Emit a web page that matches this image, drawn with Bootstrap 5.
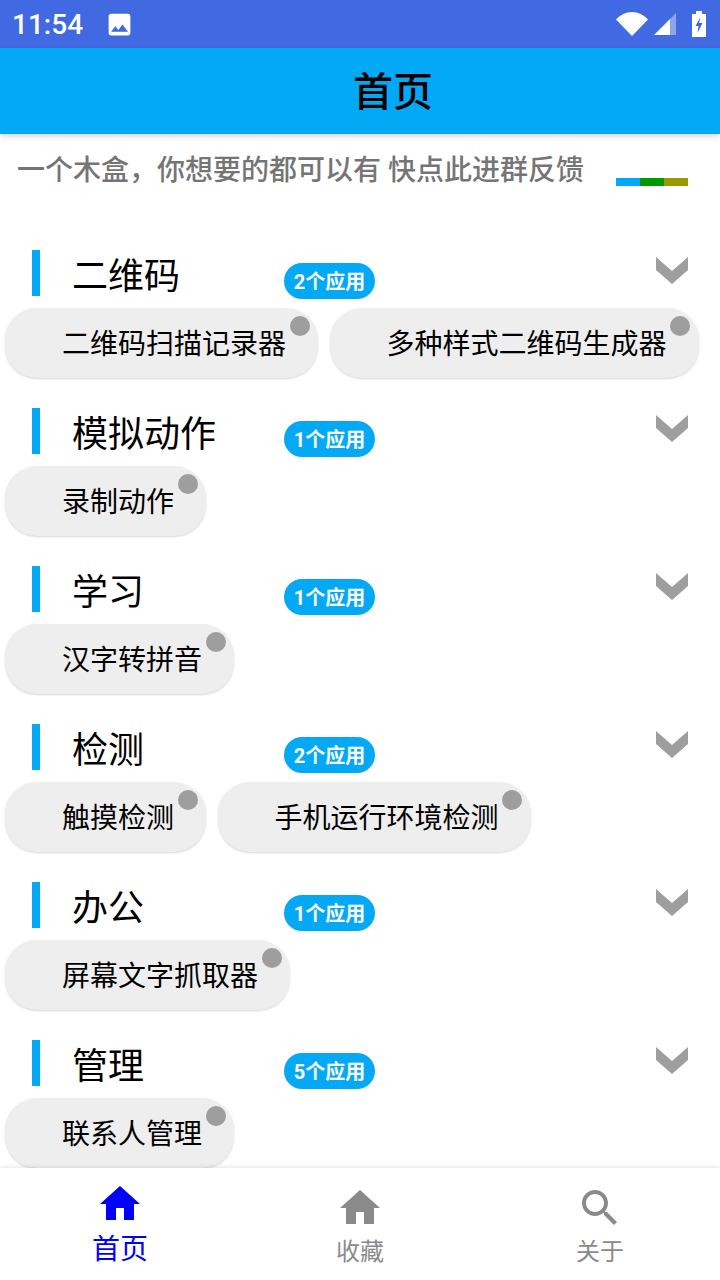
<!DOCTYPE html>
<html lang="zh">
<head>
  <meta charset="UTF-8">
  <title>首页</title>
  <link href="https://cdn.jsdelivr.net/npm/bootstrap@5.3.3/dist/css/bootstrap.min.css" rel="stylesheet">
  <style>
    html, body { height: 100%; }
    body {
      font-family: Roboto, "Noto Sans CJK SC", "Noto Sans", sans-serif;
      background: #fff;
      color: #000;
      overflow: hidden;
    }
    .phone-page { width: 720px; height: 1280px; }

    .status-strip { height: 48px; background: #4169e1; color: #fff; padding: 0 14px 0 12px; flex: none; }
    .status-time { font-family: Roboto, sans-serif; font-size: 28px; font-weight: 500; line-height: 48px; margin-top: 2px; }
    .status-pic { margin-left: 22px; }
    .status-wifi { margin-right: 6px; }
    .status-signal { margin-right: 16px; }

    .app-head {
      height: 86px; flex: none; background: #03a9f4; padding-left: 66px;
      font-size: 40px; font-weight: 500; line-height: 90px; text-align: center;
      box-shadow: 0 2px 6px rgba(0,0,0,.18); position: relative; z-index: 2;
    }

    .scroll-area { flex: 1 1 auto; min-height: 0; overflow: hidden; }

    .notice-row { height: 86px; padding: 16px 32px 0 17px; }
    .notice-text { font-size: 28px; font-weight: 500; line-height: 42px; color: #757575; white-space: nowrap; }
    .stripe-set { margin-top: 28px; }
    .stripe-set span { display: block; width: 24px; height: 8px; }
    .stripe-a { background: #03a9f4; }
    .stripe-b { background: #009900; }
    .stripe-c { background: #999900; }

    .group-block { padding-top: 30px; }
    .group-head { height: 46px; padding: 0 32px; margin-bottom: 12px; }
    .group-bar { width: 8px; height: 46px; background: #03a9f4; flex: none; }
    .group-title { width: 244px; padding-left: 32px; font-size: 36px; line-height: 54px; white-space: nowrap; }
    .count-tag {
      height: 36px; width: 91px; margin-top: 13px; padding: 0; background: #03a9f4;
      color: #fff; font-size: 20px; font-weight: 700; line-height: 38px; text-align: center;
    }
    .group-arrow { margin-top: 7px; margin-right: -1px; }

    .pill-wrap { padding-left: 5px; gap: 11.5px; }
    .app-pill {
      height: 70px; padding: 0 32px 0 57px; border-radius: 32px; background: #eeeeee;
      box-shadow: 0 1px 2px rgba(0,0,0,.16);
      font-size: 28px; line-height: 74px; white-space: nowrap; position: relative;
    }
    .pill-dot {
      position: absolute; top: 8px; right: 8.5px; width: 20px; height: 20px;
      border-radius: 50%; background: #9e9e9e;
    }

    .tab-strip {
      height: 112px; flex: none; background: #fff; position: relative; z-index: 2;
      box-shadow: 0 -1px 4px rgba(0,0,0,.1);
    }
    .tab-cell { width: 240px; color: #8a8a8a; font-size: 24px; line-height: 34px; padding-top: 16px; }
    .tab-cell svg { display: block; margin-bottom: 3px; }
    .tab-cell.is-active { color: #0000ff; font-size: 28px; padding-top: 12px; }
    .tab-cell.is-active svg { margin-bottom: 5px; }
  </style>
</head>
<body>

<div class="phone-page d-flex flex-column">

  <div class="status-strip d-flex align-items-center">
    <span class="status-time">11:54</span>
    <svg class="status-pic" width="29" height="29" viewBox="0 0 24 24" fill="#fff"><path fill-rule="evenodd" d="M21 19V5c0-1.100-.9-2-2-2H5c-1.100 0-2 .9-2 2v14c0 1.100.9 2 2 2h14c1.100 0 2-.9 2-2zM8.500 13.500l2.500 3.010L14.500 12l4.500 6H5l3.500-4.500z"/></svg>
    <svg class="status-wifi ms-auto" width="32" height="24" viewBox="0 0 32 24"><path fill="#fff" d="M0 7.500C4 3 10 0 16 0s12 3 16 7.500L16 24z"/></svg>
    <svg class="status-signal" width="22" height="22" viewBox="0 0 22 22"><path fill="#fff" d="M0 22 16 6v16z"/><path fill="#fff" fill-opacity=".4" d="M16 6 22 0v22h-6z"/></svg>
    <svg width="14" height="26" viewBox="0 0 14 26"><path fill="#fff" d="M4 0h6v3h4v23H0V3h4z"/><path fill="#4169e1" d="M8.500 6 3.500 15h3l-1 7 5-10H7z"/></svg>
  </div>

  <div class="app-head">首页</div>

  <div class="scroll-area">
    <div class="notice-row d-flex justify-content-between">
      <span class="notice-text">一个木盒，你想要的都可以有 快点此进群反馈</span>
      <div class="stripe-set d-flex"><span class="stripe-a"></span><span class="stripe-b"></span><span class="stripe-c"></span></div>
    </div>

    <div class="group-block">
      <div class="group-head d-flex align-items-start">
        <div class="group-bar"></div>
        <div class="group-title">二维码</div>
        <span class="badge rounded-pill count-tag">2个应用</span>
        <svg class="group-arrow ms-auto" width="34" height="28" viewBox="0 0 34 28"><path fill="#9e9e9e" d="M1 0 17 14 33 0v13L17 27 1 13z"/></svg>
      </div>
      <div class="pill-wrap d-flex">
        <div class="app-pill">二维码扫描记录器<span class="pill-dot"></span></div>
        <div class="app-pill">多种样式二维码生成器<span class="pill-dot"></span></div>
      </div>
    </div>

    <div class="group-block">
      <div class="group-head d-flex align-items-start">
        <div class="group-bar"></div>
        <div class="group-title">模拟动作</div>
        <span class="badge rounded-pill count-tag">1个应用</span>
        <svg class="group-arrow ms-auto" width="34" height="28" viewBox="0 0 34 28"><path fill="#9e9e9e" d="M1 0 17 14 33 0v13L17 27 1 13z"/></svg>
      </div>
      <div class="pill-wrap d-flex">
        <div class="app-pill">录制动作<span class="pill-dot"></span></div>
      </div>
    </div>

    <div class="group-block">
      <div class="group-head d-flex align-items-start">
        <div class="group-bar"></div>
        <div class="group-title">学习</div>
        <span class="badge rounded-pill count-tag">1个应用</span>
        <svg class="group-arrow ms-auto" width="34" height="28" viewBox="0 0 34 28"><path fill="#9e9e9e" d="M1 0 17 14 33 0v13L17 27 1 13z"/></svg>
      </div>
      <div class="pill-wrap d-flex">
        <div class="app-pill">汉字转拼音<span class="pill-dot"></span></div>
      </div>
    </div>

    <div class="group-block">
      <div class="group-head d-flex align-items-start">
        <div class="group-bar"></div>
        <div class="group-title">检测</div>
        <span class="badge rounded-pill count-tag">2个应用</span>
        <svg class="group-arrow ms-auto" width="34" height="28" viewBox="0 0 34 28"><path fill="#9e9e9e" d="M1 0 17 14 33 0v13L17 27 1 13z"/></svg>
      </div>
      <div class="pill-wrap d-flex">
        <div class="app-pill">触摸检测<span class="pill-dot"></span></div>
        <div class="app-pill">手机运行环境检测<span class="pill-dot"></span></div>
      </div>
    </div>

    <div class="group-block">
      <div class="group-head d-flex align-items-start">
        <div class="group-bar"></div>
        <div class="group-title">办公</div>
        <span class="badge rounded-pill count-tag">1个应用</span>
        <svg class="group-arrow ms-auto" width="34" height="28" viewBox="0 0 34 28"><path fill="#9e9e9e" d="M1 0 17 14 33 0v13L17 27 1 13z"/></svg>
      </div>
      <div class="pill-wrap d-flex">
        <div class="app-pill">屏幕文字抓取器<span class="pill-dot"></span></div>
      </div>
    </div>

    <div class="group-block">
      <div class="group-head d-flex align-items-start">
        <div class="group-bar"></div>
        <div class="group-title">管理</div>
        <span class="badge rounded-pill count-tag">5个应用</span>
        <svg class="group-arrow ms-auto" width="34" height="28" viewBox="0 0 34 28"><path fill="#9e9e9e" d="M1 0 17 14 33 0v13L17 27 1 13z"/></svg>
      </div>
      <div class="pill-wrap d-flex">
        <div class="app-pill">联系人管理<span class="pill-dot"></span></div>
      </div>
    </div>
  </div>

  <div class="tab-strip d-flex">
    <div class="tab-cell is-active d-flex flex-column align-items-center">
      <svg width="48" height="48" viewBox="0 0 24 24" fill="currentColor"><path d="M10 20v-6h4v6h5v-8h3L12 3 2 12h3v8z"/></svg>
      首页
    </div>
    <div class="tab-cell d-flex flex-column align-items-center">
      <svg width="48" height="48" viewBox="0 0 24 24" fill="currentColor"><path d="M10 20v-6h4v6h5v-8h3L12 3 2 12h3v8z"/></svg>
      收藏
    </div>
    <div class="tab-cell d-flex flex-column align-items-center">
      <svg width="48" height="48" viewBox="0 0 24 24" fill="currentColor"><path d="M15.500 14h-.79l-.28-.27C15.410 12.590 16 11.110 16 9.500 16 5.910 13.090 3 9.500 3S3 5.910 3 9.500 5.910 16 9.500 16c1.610 0 3.090-.59 4.230-1.570l.27.28v.79l5 4.990L20.490 19l-4.990-5zm-6 0C7.010 14 5 11.990 5 9.500S7.010 5 9.500 5 14 7.010 14 9.500 11.990 14 9.500 14z"/></svg>
      关于
    </div>
  </div>

</div>

<script src="https://cdn.jsdelivr.net/npm/bootstrap@5.3.3/dist/js/bootstrap.bundle.min.js"></script>
</body>
</html>
